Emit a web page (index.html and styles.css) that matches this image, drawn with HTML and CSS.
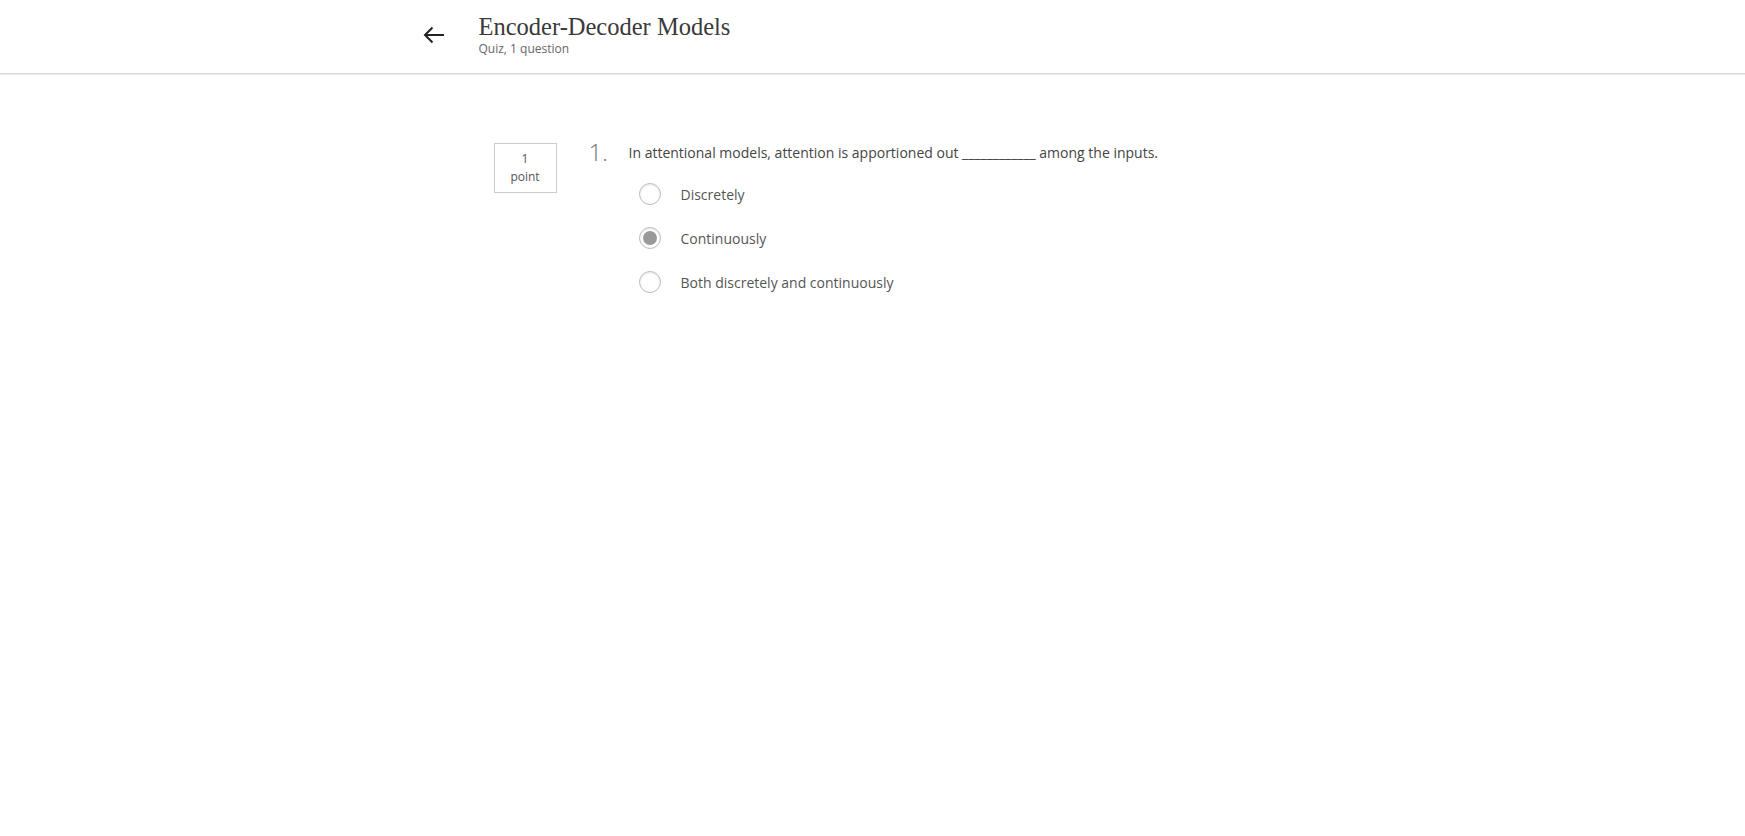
FILE: index.html
```html
<!DOCTYPE html>
<html>
<head>
<meta charset="utf-8">
<link rel="stylesheet" href="styles.css">
</head>
<body>
<header class="topbar">
  <div class="bar-inner">
    <div class="back">
      <svg width="22" height="18" viewBox="0 0 22 18"><path d="M21 9H2M9.5 1.5L2 9l7.5 7.5" fill="none" stroke="#222" stroke-width="2"/></svg>
    </div>
    <div class="titles">
      <div class="title">Encoder-Decoder Models</div>
      <div class="subtitle">Quiz, 1 question</div>
    </div>
  </div>
</header>
<main class="content">
  <div class="question">
    <div class="points">1<br>point</div>
    <div class="qnum">1.</div>
    <div class="qbody">
      <div class="qtext">In attentional models, attention is apportioned out ____________ among the inputs.</div>
      <div class="options">
        <label class="opt"><span class="radio"></span><span>Discretely</span></label>
        <label class="opt"><span class="radio checked"></span><span>Continuously</span></label>
        <label class="opt"><span class="radio"></span><span>Both discretely and continuously</span></label>
      </div>
    </div>
  </div>
</main>
</body>
</html>
```
FILE: styles.css
```css
html, body { margin: 0; padding: 0; background: #fff; }
body { font-family: "Open Sans", "Liberation Sans", sans-serif; color: #444; }
.topbar { height: 73px; border-bottom: 1px solid #d6d6d6; box-shadow: 0 1px 1px #eee; }
.bar-inner { width: 900px; margin: 0 auto; display: flex; align-items: flex-start; }
.back { width: 56px; padding-top: 26px; padding-left: 0; }
.titles { padding-top: 12px; }
.title { font-family: "Liberation Serif", "DejaVu Serif", serif; font-size: 24.5px; color: #3a3a3a; line-height: 30px; }
.subtitle { font-size: 12px; color: #666; line-height: 14px; margin-top: 0; }
.content { width: 900px; margin: 0 auto; padding-top: 69px; }
.question { display: flex; align-items: flex-start; padding-left: 71px; }
.points { width: 61px; height: 48px; border: 1px solid #ccc; font-size: 12px; line-height: 18px; text-align: center; display: flex; flex-direction: column; justify-content: center; color: #555; }
.qnum { font-size: 24px; font-weight: 300; color: #777; margin-left: 32px; width: 40px; line-height: 24px; margin-top: -3px; }
.qbody { padding-top: 0; }
.qtext { font-size: 14px; line-height: 20px; color: #444; }
.options { display: flex; flex-direction: column; padding-left: 10px; padding-top: 9px; }
.opt { display: flex; align-items: center; height: 44px; font-size: 14px; color: #555; }
.radio { width: 20px; height: 20px; border: 1px solid #bbb; border-radius: 50%; margin-right: 20px; box-shadow: inset 0 1px 2px rgba(0,0,0,0.1); position: relative; background: #fff; }
.radio.checked::after { content: ""; position: absolute; left: 3px; top: 3px; width: 14px; height: 14px; border-radius: 50%; background: #999; }
```
